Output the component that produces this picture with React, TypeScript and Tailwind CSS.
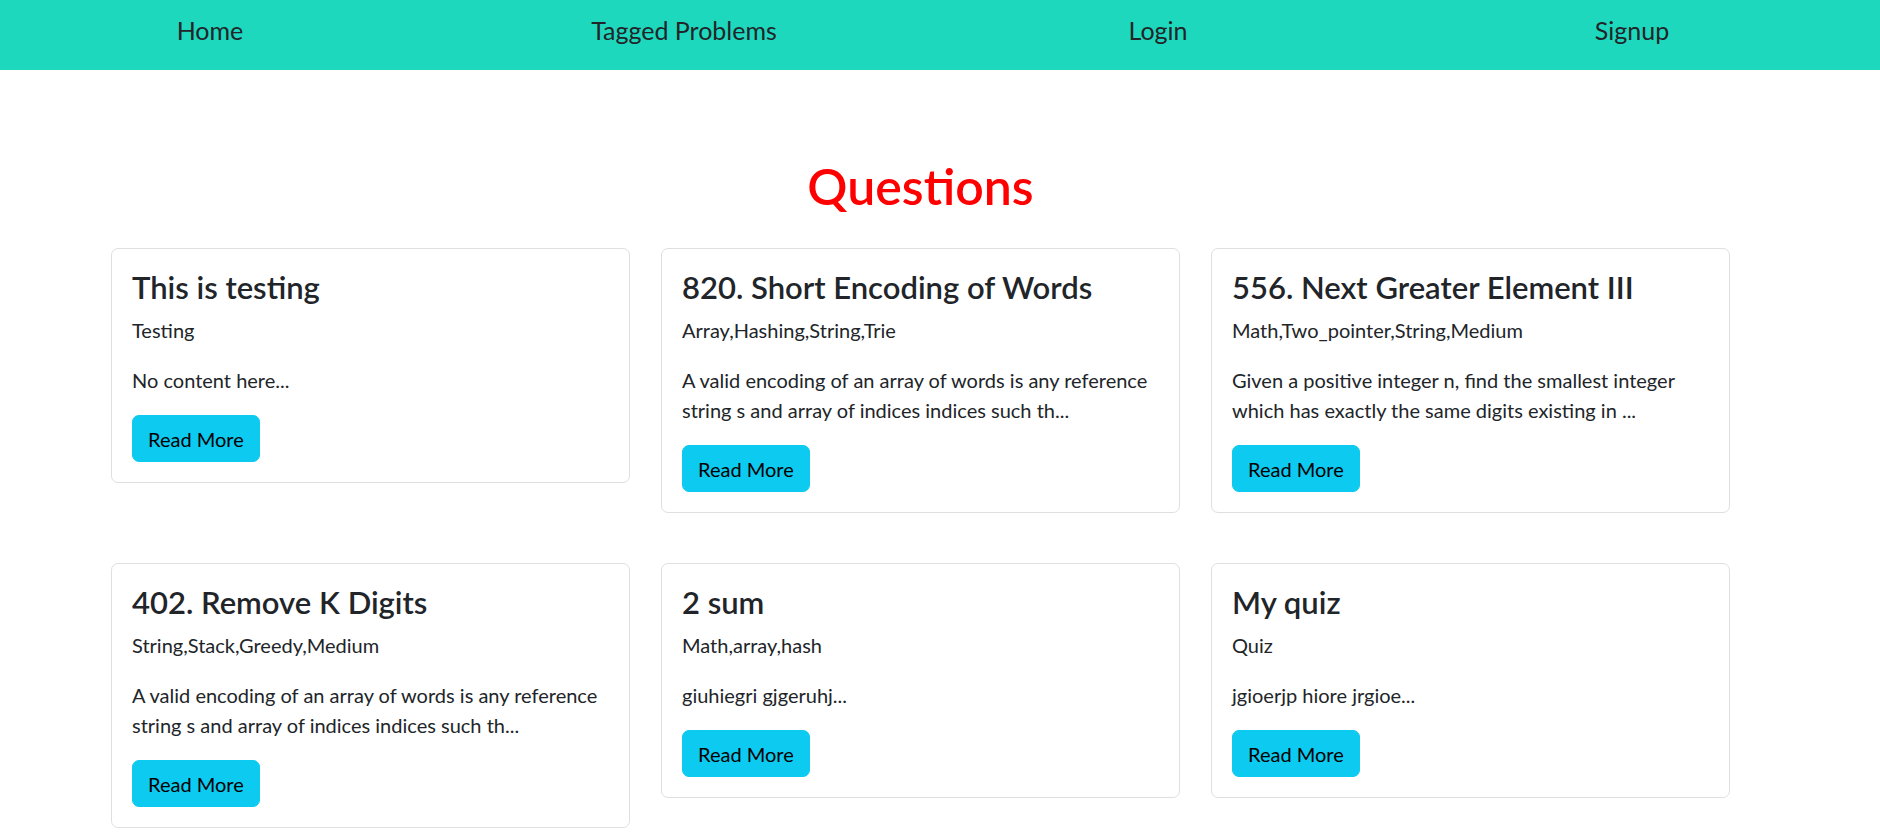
import React from 'react';

type Question = {
    title: string;
    tags: string;
    content: string;
};

// questions shown on the home page, content already cut to a preview
const questions: Question[] = [
    { title: 'This is testing', tags: 'Testing', content: 'No content here...' },
    {
        title: '820. Short Encoding of Words',
        tags: 'Array,Hashing,String,Trie',
        content: 'A valid encoding of an array of words is any reference string s and array of indices indices such th...',
    },
    {
        title: '556. Next Greater Element III',
        tags: 'Math,Two_pointer,String,Medium',
        content: 'Given a positive integer n, find the smallest integer which has exactly the same digits existing in ...',
    },
    {
        title: '402. Remove K Digits',
        tags: 'String,Stack,Greedy,Medium',
        content: 'A valid encoding of an array of words is any reference string s and array of indices indices such th...',
    },
    { title: '2 sum', tags: 'Math,array,hash', content: 'giuhiegri gjgeruhj...' },
    { title: 'My quiz', tags: 'Quiz', content: 'jgioerjp hiore jrgioe...' },
];

const navLinks = ['Home', 'Tagged Problems', 'Login', 'Signup'];

const QuestionCard: React.FC<{ q: Question }> = ({ q }) => (
    <div className="rounded-[7px] border border-[#dfdfdf] bg-white p-5">
        <h3 className="mb-[10px] text-[31px] font-semibold leading-[36px] text-[#212529]">{q.title}</h3>
        <p className="mb-5 text-[20px] leading-[30px] text-[#212529]">{q.tags}</p>
        <p className="mb-5 text-[20px] leading-[30px] text-[#212529]">{q.content}</p>
        <button className="rounded-[7px] border border-[#0dcaf0] bg-[#0dcaf0] px-[15px] py-[7.5px] text-[20px] leading-[30px] text-black">
            Read More
        </button>
    </div>
);

const App: React.FC = () => {
    return (
        <div className="min-h-screen bg-white font-['Lato','Open_Sans',sans-serif] text-[#212529]">
            {/* Top nav */}
            <nav className="flex h-[70px] items-center justify-center overflow-hidden bg-[#1ed8bd] pr-[38px] pb-[8px]">
                {navLinks.map((link) => (
                    <a key={link} href="#" className="w-[474px] shrink-0 text-center text-[25px] text-[#212529]">
                        {link}
                    </a>
                ))}
            </nav>

            <div className="ml-[111px] w-[1619px] pb-10">
                <h1 className="mt-[86px] mb-8 text-center text-[50px] font-semibold leading-[60px] text-[#ff0000]">
                    Questions
                </h1>

                <div className="grid grid-cols-3 items-start gap-x-[31px] gap-y-[50px]">
                    {questions.map((q, index) => (
                        <QuestionCard key={index} q={q} />
                    ))}
                </div>
            </div>
        </div>
    );
};

export default App;
